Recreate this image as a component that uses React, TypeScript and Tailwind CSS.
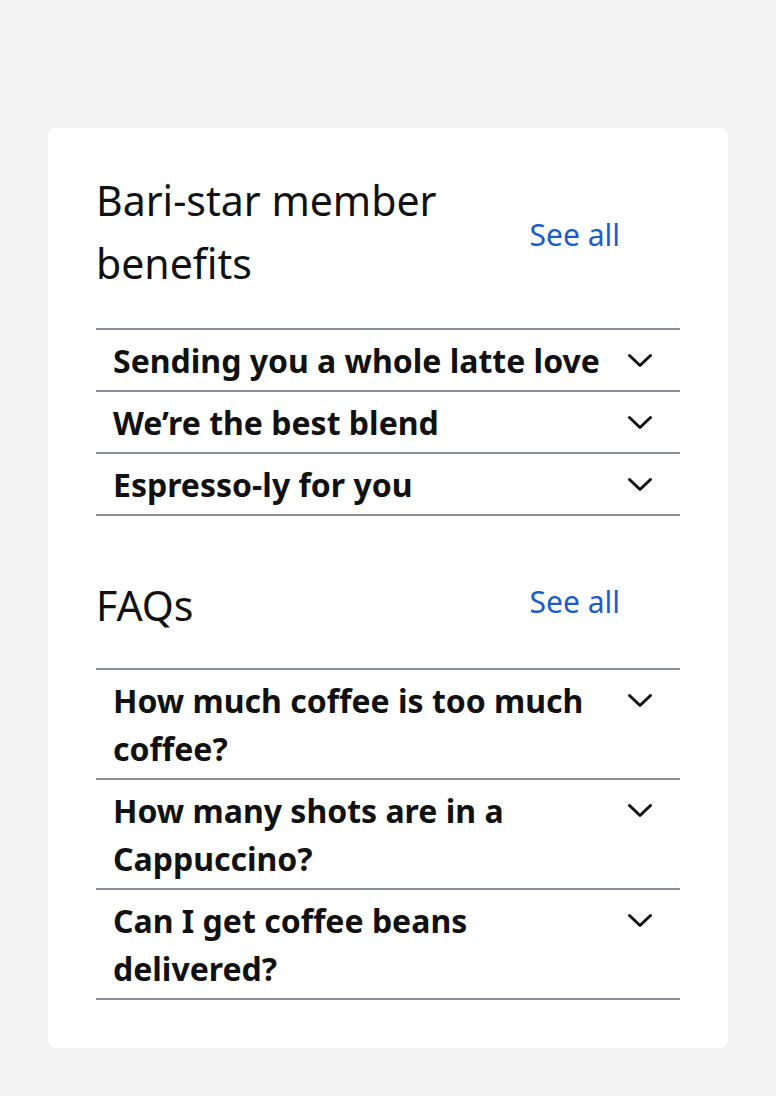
import React from "react";

const Chevron = () => (
  <svg width="24" height="24" viewBox="0 0 24 24" fill="none" className="shrink-0">
    <path d="M1.5 6.5 L12 16.5 L22.5 6.5" stroke="#111111" strokeWidth="3" strokeLinecap="round" strokeLinejoin="round" />
  </svg>
);

const Row = ({ text }: { text: string }) => (
  <li className="flex items-start justify-between border-t-2 border-[#8b8e98] pt-[7px] pb-[5px] pl-[17px] pr-[28px]">
    <span className="pr-6 text-[32px] leading-[48px] font-bold text-[#111111]">{text}</span>
    <span className="flex h-[48px] shrink-0 items-center">
      <Chevron />
    </span>
  </li>
);

export default function App() {
  const benefits = ["Sending you a whole latte love", "We’re the best blend", "Espresso-ly for you"];
  const faqs = ["How much coffee is too much coffee?", "How many shots are in a Cappuccino?", "Can I get coffee beans delivered?"];
  return (
    <div className="min-h-screen bg-[#f3f3f3] px-12 pt-32 pb-12 font-['Noto_Sans',sans-serif]">
      <div className="rounded-lg bg-white px-12 pt-[41px] pb-12">
        <section>
          <div className="mb-[33px] flex items-center justify-between pr-[60px]">
            <h2 className="max-w-[400px] text-[41px] leading-[63px] font-normal text-[#111111]">Bari-star member benefits</h2>
            <a className="mt-[4px] text-[30px] leading-[45px] text-[#1d5cc6]">See all</a>
          </div>
          <ul className="border-b-2 border-[#8b8e98]">
            {benefits.map((t) => (
              <Row key={t} text={t} />
            ))}
          </ul>
        </section>
        <section className="mt-[58px]">
          <div className="mb-[31px] flex items-center justify-between pr-[60px]">
            <h2 className="text-[41px] leading-[63px] font-normal text-[#111111]">FAQs</h2>
            <a className="mb-[8px] text-[30px] leading-[45px] text-[#1d5cc6]">See all</a>
          </div>
          <ul className="border-b-2 border-[#8b8e98]">
            {faqs.map((t) => (
              <Row key={t} text={t} />
            ))}
          </ul>
        </section>
      </div>
    </div>
  );
}
